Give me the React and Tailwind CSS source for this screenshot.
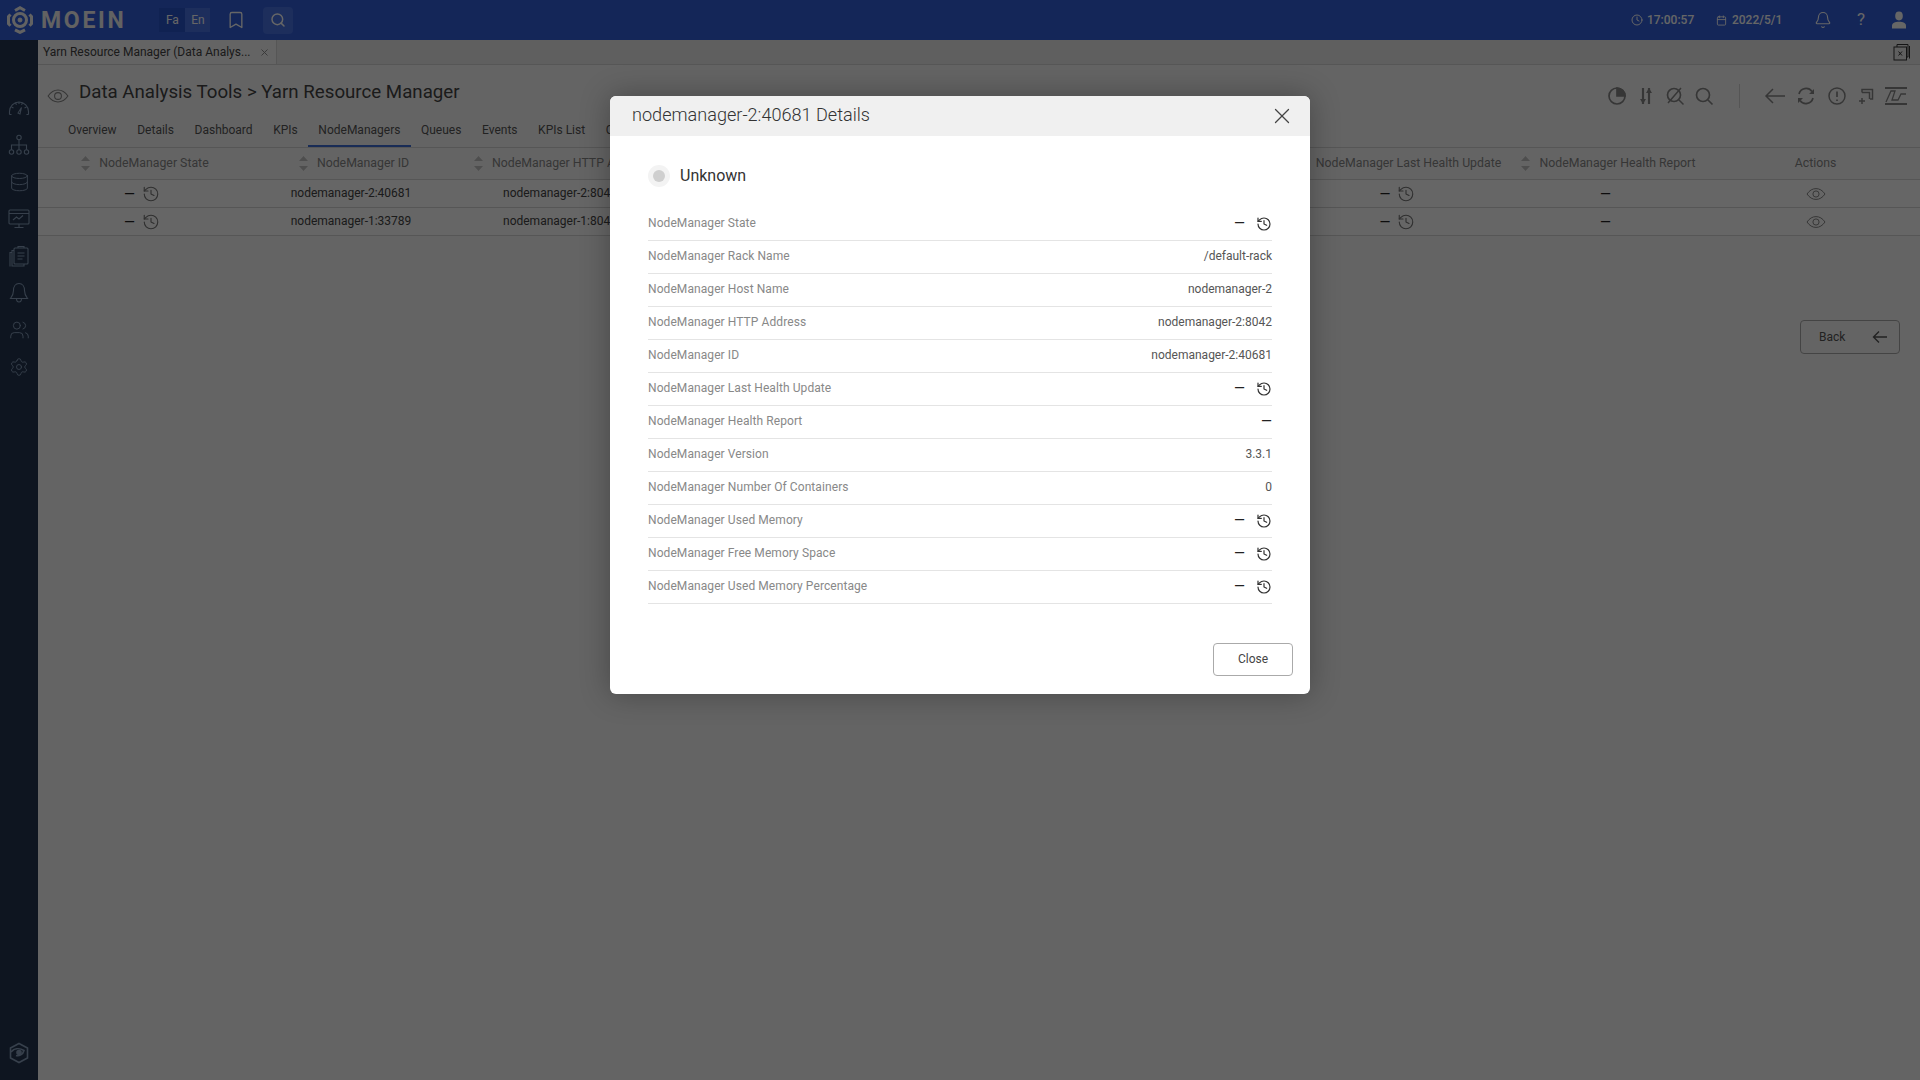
import React from "react";
import { Bell, Bookmark, Calendar, Clock, Database, History, Search, Settings, Users, X } from "lucide-react";

// ---------- Data ----------
const tabs = ["Overview", "Details", "Dashboard", "KPIs", "NodeManagers", "Queues", "Events", "KPIs List", "Charts"];

const tableRows = [
  { id: "nodemanager-2:40681", http: "nodemanager-2:8042" },
  { id: "nodemanager-1:33789", http: "nodemanager-1:8042" },
];

const details = [
  { label: "NodeManager State", history: true },
  { label: "NodeManager Rack Name", value: "/default-rack" },
  { label: "NodeManager Host Name", value: "nodemanager-2" },
  { label: "NodeManager HTTP Address", value: "nodemanager-2:8042" },
  { label: "NodeManager ID", value: "nodemanager-2:40681" },
  { label: "NodeManager Last Health Update", history: true },
  { label: "NodeManager Health Report", dash: true },
  { label: "NodeManager Version", value: "3.3.1" },
  { label: "NodeManager Number Of Containers", value: "0" },
  { label: "NodeManager Used Memory", history: true },
  { label: "NodeManager Free Memory Space", history: true },
  { label: "NodeManager Used Memory Percentage", history: true },
];

// ---------- Drawn icons ----------
function LogoMark() {
  return (
    <svg width="28" height="28" viewBox="0 0 28 28" fill="none" stroke="currentColor">
      <path d="M9 4.5 14 1.8l5 2.7M23.5 8.5l2 2.2v7l-2 2M19 23.8l-5 2.6-5-2.6M4.5 19.7l-2-2v-7l2-2.2" strokeWidth="3" />
      <circle cx="14" cy="14" r="6.5" strokeWidth="3" />
      <circle cx="14" cy="14" r="2" fill="currentColor" strokeWidth="1" />
    </svg>
  );
}

function SideGauge() {
  return (
    <svg width="22" height="20" viewBox="0 0 22 20" fill="none" stroke="currentColor" strokeWidth="1.1">
      <path d="M1.500 16.500v-3a9.500 9.500 0 0 1 19 0v3" />
      <path d="M1.500 16.500h2M18.500 16.500h2M3.500 9l2 1M18.500 9l-2 1M7.500 5l1 1.800M14.500 5l-1 1.800M11 4v2M10 15l3.500-5.500-1.500 6.500z" />
    </svg>
  );
}

function SideTree() {
  return (
    <svg width="22" height="22" viewBox="0 0 22 22" fill="none" stroke="currentColor" strokeWidth="1.1">
      <circle cx="11" cy="3.500" r="2.200" />
      <circle cx="3.500" cy="18" r="2.200" />
      <circle cx="11" cy="18" r="2.200" />
      <circle cx="18.500" cy="18" r="2.200" />
      <path d="M11 5.700v10M3.500 15.800V11h15v4.800" />
    </svg>
  );
}

function MonitorChart() {
  return (
    <svg width="22" height="20" viewBox="0 0 22 20" fill="none" stroke="currentColor" strokeWidth="1.1">
      <rect x="1" y="1" width="20" height="14" rx="1" />
      <path d="M1 4.500h20M5 11l3.500-3 2.500 2 4-3.500M11 15v3M6.500 18.500h9" />
    </svg>
  );
}

function SideClipboard() {
  return (
    <svg width="20" height="22" viewBox="0 0 20 22" fill="none" stroke="currentColor" strokeWidth="1.1">
      <rect x="5" y="3" width="14" height="16" rx="1" />
      <path d="M9 3V1.500h6V3M8.500 8h7M8.500 11h7M8.500 14h5M5 5.500H3V21h12v-2M3 7.500H1v14" />
    </svg>
  );
}

function SideBell() {
  return (
    <svg width="20" height="22" viewBox="0 0 20 22" fill="none" stroke="currentColor" strokeWidth="1.1">
      <path d="M10 1.500c-3.500 0-5.500 3-5.500 7 0 3.500-1 5.500-3 8h17c-2-2.500-3-4.500-3-8 0-4-2-7-5.500-7zM7.500 16.500c0 2 1 3.500 2.500 3.500s2.500-1.500 2.500-3.500" />
    </svg>
  );
}

function SideEye() {
  return (
    <svg width="22" height="22" viewBox="0 0 22 22" fill="none" stroke="currentColor" strokeWidth="1.6">
      <path d="M11 1.500 19.500 6v10L11 20.500 2.500 16V6z" />
      <path d="M3 10c3-3.500 8-4.500 13-1.500-1 4-5 6-8 5" />
      <circle cx="11" cy="10.500" r="2" fill="currentColor" />
    </svg>
  );
}

function UserSolid() {
  return (
    <svg width="18" height="18" viewBox="0 0 18 18" fill="currentColor">
      <ellipse cx="9" cy="5" rx="3.800" ry="4.400" />
      <path d="M2 17.500v-3c0-2.400 3-3.800 7-3.800s7 1.400 7 3.800v3z" />
    </svg>
  );
}

function SortArrows() {
  return (
    <svg width="9" height="15" viewBox="0 0 9 15" fill="currentColor" className="shrink-0">
      <path d="M4.500 0 9 5H0zM0 10h9l-4.500 5z" />
    </svg>
  );
}

function EyeOutline({ size = 20 }) {
  return (
    <svg width={size} height={size} viewBox="0 0 20 20" fill="none" stroke="currentColor" strokeWidth="1">
      <path d="M1 10c2.500-3.600 5.500-5.400 9-5.400s6.500 1.800 9 5.400c-2.500 3.600-5.500 5.400-9 5.400S3.500 13.600 1 10z" />
      <circle cx="10" cy="10" r="3.100" />
    </svg>
  );
}

function ToolIcon({ children, width = 20 }) {
  return (
    <svg width={width} height="20" viewBox={"0 0 " + width + " 20"} fill="none" stroke="currentColor" strokeWidth="1.700">
      {children}
    </svg>
  );
}

function Dash() {
  return <span className="text-[14px] leading-none text-[#222]">—</span>;
}

// ---------- Parts ----------
function TopBar() {
  return (
    <header className="flex h-10 shrink-0 items-center bg-[#325fdd] text-white">
      <div className="ml-[6px] flex items-center text-[#f5f5f5]">
        <LogoMark />
        <span className="ml-[7px] text-[23px] font-bold leading-none tracking-[2.700px]">MOEIN</span>
      </div>
      <div className="ml-[33px] flex h-6 text-[12px] leading-6">
        <span className="w-[26px] bg-[#2a55cc] text-center">Fa</span>
        <span className="w-[25px] bg-[#4a74e6] text-center">En</span>
      </div>
      <Bookmark size={20} strokeWidth={1.600} className="ml-4" />
      <div className="ml-[17px] flex h-[27px] w-[30px] items-center justify-center rounded-sm bg-[#4a74e6]">
        <Search size={16} strokeWidth={2.200} />
      </div>
      <div className="ml-auto flex items-center text-[12px] font-medium">
        <Clock size={12} />
        <span className="ml-[4px] w-[45px]">17:00:57</span>
        <Calendar size={11} className="ml-[24px]" />
        <span className="ml-[5px] w-[50px]">2022/5/1</span>
        <Bell size={18} strokeWidth={1.500} className="ml-[32px]" />
        <span className="ml-[25px] text-[17px] font-normal">?</span>
        <span className="ml-[25px] mr-3"><UserSolid /></span>
      </div>
    </header>
  );
}

function SideBar() {
  return (
    <aside className="flex w-[38px] shrink-0 flex-col items-center bg-[#233650] text-[#8aa0be]">
      <div className="mt-[57px] flex flex-col items-center gap-[15px]">
        <span className="flex h-[22px] items-center"><SideGauge /></span>
        <span className="flex h-[22px] items-center"><SideTree /></span>
        <Database size={21} strokeWidth={1.100} className="h-[22px]" />
        <span className="flex h-[22px] items-center"><MonitorChart /></span>
        <span className="flex h-[22px] items-center"><SideClipboard /></span>
        <span className="flex h-[22px] items-center"><SideBell /></span>
        <Users size={21} strokeWidth={1.100} className="h-[22px]" />
        <Settings size={20} strokeWidth={1.100} className="h-[22px]" />
      </div>
      <div className="mb-[16px] mt-auto"><SideEye /></div>
    </aside>
  );
}

function ToolBar() {
  return (
    <div className="mr-[12px] mt-[7px] flex items-center text-[#888]">
      <span className="ml-px">
        <ToolIcon><circle cx="10" cy="10" r="8" /><path d="M10 10V2a8 8 0 0 1 8 8z" fill="currentColor" /></ToolIcon>
      </span>
      <span className="ml-[9px]">
        <ToolIcon><path d="M7 18V2M13 2v16" strokeWidth="2.200" /><path d="M4 13l3 5 3-5zM10 7l3-5 3 5z" fill="currentColor" stroke="none" /></ToolIcon>
      </span>
      <span className="ml-[9px]">
        <ToolIcon><circle cx="9" cy="9" r="6.500" /><path d="M14 14l4.500 4.500M3 17 16 2" strokeWidth="1.500" /></ToolIcon>
      </span>
      <span className="ml-[9px]">
        <ToolIcon><circle cx="9" cy="9" r="6.500" /><path d="M14 14l4.500 4.500" /></ToolIcon>
      </span>
      <span className="ml-[25px] h-[24px] w-px bg-[#d4d4d4]" />
      <span className="ml-[24px]">
        <ToolIcon width={22}><path d="M21 10H2M9 3l-7 7 7 7" strokeWidth="1.500" /></ToolIcon>
      </span>
      <span className="ml-[10px]">
        <ToolIcon><path d="M3 8a7.300 7.300 0 0 1 13-2.500M17 12a7.300 7.300 0 0 1-13 2.500" /><path d="M18 3v5h-5zM2 17v-5h5z" fill="currentColor" stroke="none" /></ToolIcon>
      </span>
      <span className="ml-[11px]">
        <ToolIcon><circle cx="10" cy="10" r="8" strokeWidth="1.500" /><path d="M10 5.500v5.500M10 13.500v1.500" /></ToolIcon>
      </span>
      <span className="ml-[9px]">
        <ToolIcon><path d="M6 6.500V3.500h10.500V13H14M6 6.500h7.500V13M3 15h6M6 12v6" strokeWidth="1.500" /></ToolIcon>
      </span>
      <span className="ml-[8px]">
        <ToolIcon width={24}><path d="M1 2h22M1 18h22" strokeWidth="1.800" /><path d="M2 16 7 5h4l-3 9h6l3-6h5" strokeWidth="1.300" /></ToolIcon>
      </span>
    </div>
  );
}

function HeaderCell({ className, children, sort = true }) {
  return (
    <div className={"flex items-center justify-center gap-[9px] " + className}>
      {sort && <span className="text-[#c4c4c4]"><SortArrows /></span>}
      <span>{children}</span>
    </div>
  );
}

function DashHistory({ className }) {
  return (
    <div className={"flex items-center justify-center gap-[7px] " + className}>
      <Dash />
      <History size={18} strokeWidth={1.500} className="text-[#777]" />
    </div>
  );
}

function NodeTable() {
  return (
    <div className="text-[12px]">
      <div className="flex h-[33px] items-center border-y border-[#d8d8d8] text-[12.300px] text-[#888]">
        <HeaderCell className="w-[208px] pl-[6px]">NodeManager State</HeaderCell>
        <HeaderCell className="w-[210px] pl-[6px]">NodeManager ID</HeaderCell>
        <HeaderCell className="w-[834px] !justify-start pl-[18px]">NodeManager HTTP Address</HeaderCell>
        <HeaderCell className="w-[215px] pl-[4px]">NodeManager Last Health Update</HeaderCell>
        <HeaderCell className="w-[210px] pr-[3px]">NodeManager Health Report</HeaderCell>
        <HeaderCell className="w-[205px] pr-[4px]" sort={false}>Actions</HeaderCell>
      </div>
      {tableRows.map((row) => (
        <div key={row.id} className="flex h-[28px] items-center border-b border-[#d8d8d8] bg-white text-[#444]">
          <DashHistory className="w-[208px]" />
          <div className="w-[210px] pb-px text-center">{row.id}</div>
          <div className="w-[834px] pb-px pl-[47px]">{row.http}</div>
          <DashHistory className="w-[215px]" />
          <div className="flex w-[210px] justify-center pr-[9px]"><Dash /></div>
          <div className="flex w-[205px] justify-center pr-[4px] text-[#888]"><EyeOutline /></div>
        </div>
      ))}
    </div>
  );
}

function MainPage() {
  return (
    <main className="flex min-w-0 flex-1 flex-col bg-[#fbfbfb]">
      <div className="flex h-[25px] shrink-0 items-stretch justify-between border-b border-[#d8d8d8] bg-[#eeeeee]">
        <div className="flex w-[239px] items-center justify-between border-r border-[#d8d8d8] bg-[#fbfbfb] pl-[5px] pr-[6px] text-[12px] text-[#444]">
          <span className="whitespace-nowrap">Yarn Resource Manager (Data Analys...</span>
          <X size={11} className="text-[#888]" />
        </div>
        <svg width="18" height="18" viewBox="0 0 18 18" fill="none" stroke="#333" strokeWidth="1" className="mr-[9px] mt-[3px]">
          <rect x="1" y="4" width="12.500" height="13" />
          <path d="M4 4V1.500h11V14h-1.500M16.500 3v12.500" />
          <path d="M5.500 8.500l3.500 4M9 8.500l-3.500 4" />
        </svg>
      </div>

      <div className="flex h-[54px] shrink-0 items-center justify-between">
        <div className="flex items-center pl-[9px]">
          <span className="mt-[7px] text-[#888]"><EyeOutline size={22} /></span>
          <span className="ml-[10px] text-[18.700px] text-[#444]">Data Analysis Tools &gt; Yarn Resource Manager</span>
        </div>
        <ToolBar />
      </div>

      <nav className="flex h-[28px] shrink-0 pl-[19.700px] text-[12px] text-[#555]">
        {tabs.map((tab) => (
          <span
            key={tab}
            className={
              "h-[28px] px-[10.300px] pt-[2px] " +
              (tab === "NodeManagers" ? "border-b-2 border-[#3f6fd8]" : "")
            }
          >
            {tab}
          </span>
        ))}
      </nav>

      <NodeTable />

      <div className="mr-[20px] mt-[84px] flex justify-end">
        <button className="flex h-[34px] w-[100px] items-center justify-between rounded border border-[#aaa] pl-[18px] pr-[11px] text-[12px] text-[#555]">
          Back
          <svg width="16" height="14" viewBox="0 0 16 14" fill="none" stroke="currentColor" strokeWidth="1.400">
            <path d="M15 7H1.500M7 1.500 1.500 7 7 12.500" />
          </svg>
        </button>
      </div>
    </main>
  );
}

function DetailsModal() {
  return (
    <div className="absolute inset-0 bg-black/60">
      <div className="mx-auto mt-[96px] h-[598px] w-[700px] overflow-hidden rounded-md bg-white shadow-[0_0_30px_rgba(0,0,0,0.3)]">
        <div className="flex h-10 items-center justify-between bg-[#f0f0f0] pl-[22px] pr-[15px]">
          <span className="mb-[2px] text-[18.100px] font-light text-[#333]">nodemanager-2:40681 Details</span>
          <X size={26} strokeWidth={1.200} className="text-[#444]" />
        </div>

        <div className="px-[38px]">
          <div className="flex h-[72px] items-center pt-[8px]">
            <div className="flex h-[22px] w-[22px] items-center justify-center rounded-full bg-[#f3f3f3]">
              <div className="h-[12px] w-[12px] rounded-full bg-[#cfcfcf]" />
            </div>
            <span className="ml-[10px] text-[16px] text-[#333]">Unknown</span>
          </div>

          {details.map((row) => (
            <div key={row.label} className="flex h-[33px] items-center justify-between border-b border-[#e4e4e4] pb-[2px] text-[12px]">
              <span className="tracking-[0.080px] text-[#888]">{row.label}</span>
              {row.history && (
                <span className="flex items-center gap-[11px]">
                  <Dash />
                  <History size={16} strokeWidth={1.800} className="mt-[2px] text-[#333]" />
                </span>
              )}
              {row.dash && <Dash />}
              {row.value && <span className="text-[#555]">{row.value}</span>}
            </div>
          ))}

          <div className="-mr-[21px] mt-[39px] flex justify-end">
            <button className="h-[33px] w-[80px] rounded border border-[#aaa] pb-[2px] text-[12px] text-[#444]">Close</button>
          </div>
        </div>
      </div>
    </div>
  );
}

export default function App() {
  return (
    <div className="relative flex h-screen w-screen flex-col overflow-hidden font-['Roboto',sans-serif]">
      <TopBar />
      <div className="flex min-h-0 flex-1">
        <SideBar />
        <MainPage />
      </div>
      <DetailsModal />
    </div>
  );
}
